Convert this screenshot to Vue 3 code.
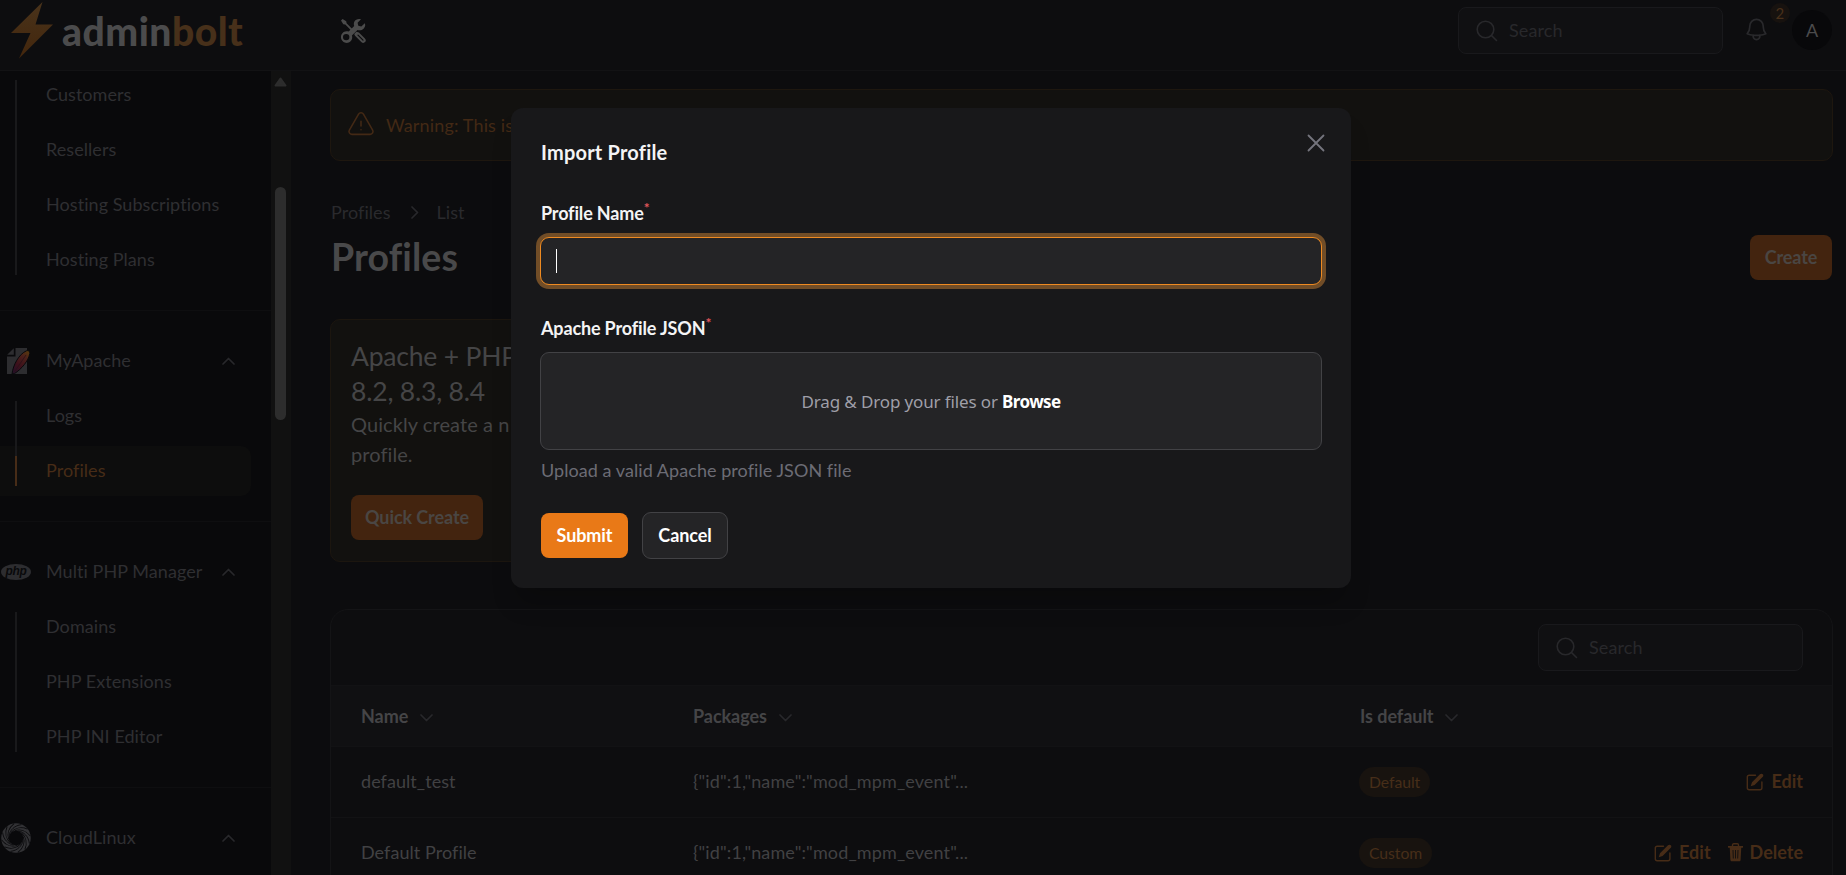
<script setup>
const groups = [
  { items: ['Customers', 'Resellers', 'Hosting Subscriptions', 'Hosting Plans'] },
  { title: 'MyApache', icon: 'apache', items: ['Logs', 'Profiles'] },
  { title: 'Multi PHP Manager', icon: 'php', items: ['Domains', 'PHP Extensions', 'PHP INI Editor'] },
  { title: 'CloudLinux', icon: 'cloud', items: [] },
]
const rows = [
  { name: 'default_test', tag: 'Default', removable: false },
  { name: 'Default Profile', tag: 'Custom', removable: true },
]
const blades = Array.from({ length: 12 }, (_, i) => i * 30)
</script>

<template>
  <div class="app">
    <header class="topbar">
      <div class="brand">
        <svg class="bolt" width="42" height="57" viewBox="0 0 42 57">
          <defs>
            <linearGradient id="boltFill" x1="0" y1="0" x2="0" y2="1">
              <stop offset="0" stop-color="#49331b" />
              <stop offset="1" stop-color="#43260c" />
            </linearGradient>
          </defs>
          <path d="M31.500 0 0 31h19.500L8 56.500 42 22.500H24.500z" fill="url(#boltFill)" />
        </svg>
        <span class="wordmark">admin<b>bolt</b></span>
      </div>
      <svg class="tools" width="26" height="26" viewBox="0 0 26 26">
        <path d="M1 2.600 2.600 1l3.600 2.300.4 2 5.900 5.900-1.300 1.300-5.900-5.900-2-.4z" fill="#4b4b4b" />
        <path d="M24.800 5.200 21.300 8.500l-3-.7-.7-3L21 1.300C18.500.4 15.500 1.200 14.300 3.800c-.6 1.400-.6 2.800-.1 4.100L8.700 13.500c-3-.9-5.900.3-7.200 3-1.600 3.300.2 7.500 3.900 8.300 3.700.8 7-2.100 6.800-5.600 0-.6-.1-1.100-.3-1.600l5.600-5.600c2.200.8 4.700.2 6.300-1.500 1.500-1.600 1.700-3.700 1-5.300zM6.200 22.300a3.200 3.200 0 1 1 0-6.400 3.200 3.200 0 0 1 0 6.400z" fill="#4b4b4b" fill-rule="evenodd" />
        <path d="m14.200 16 2.200-2.200 2.500.6 6 6c1.200 1.200 1.200 2.600.2 3.700-1.100 1.100-2.700 1-3.800-.1l-6.300-6.200z" fill="#4b4b4b" />
        <path d="m18 17.200 5 5" stroke="#0d0d0f" stroke-width="1.200" stroke-linecap="round" />
      </svg>
      <div class="top-actions">
        <div class="search">
          <svg width="24" height="24" viewBox="0 0 24 24" fill="none" stroke="currentColor" stroke-width="1.600" stroke-linecap="round"><circle cx="10.500" cy="10.500" r="8.300" /><path d="m16.500 16.500 5 5" /></svg>
          <span>Search</span>
        </div>
        <div class="bell">
          <svg width="27" height="27" viewBox="0 0 24 24" fill="none" stroke="currentColor" stroke-width="1.500" stroke-linecap="round" stroke-linejoin="round"><path d="M14.857 17.082a23.848 23.848 0 0 0 5.454-1.310A8.967 8.967 0 0 1 18 9.750V9A6 6 0 0 0 6 9v.75a8.967 8.967 0 0 1-2.312 6.022c1.733.64 3.560 1.085 5.455 1.310m5.714 0a24.255 24.255 0 0 1-5.714 0m5.714 0a3 3 0 1 1-5.714 0" /></svg>
          <span class="count">2</span>
        </div>
        <div class="avatar">A</div>
      </div>
    </header>

    <div class="body">
      <aside class="sidebar">
        <nav class="menu">
          <section v-for="(group, g) in groups" :key="g" class="group">
            <div v-if="group.title" class="row heading">
              <span class="icon-cell">
                <svg v-if="group.icon === 'apache'" class="apache" width="25" height="28" viewBox="0 0 25 28">
                  <defs>
                    <linearGradient id="feather" x1="0.800" y1="0" x2="0.200" y2="1">
                      <stop offset="0" stop-color="#55360f" />
                      <stop offset="0.250" stop-color="#4c211a" />
                      <stop offset="0.650" stop-color="#3d101b" />
                      <stop offset="1" stop-color="#261029" />
                    </linearGradient>
                  </defs>
                  <path d="M9.500 1H21v26H1V9.500h8.500z" fill="#2d2d30" />
                  <path d="M7.800 1.200V7.800H1.200z" fill="#2d2d30" />
                  <path d="M6 27C7 18 13 7 20.500 3.800c2-.8 3.600.4 3.300 2.600C22.500 14 15.500 22 8.500 26.600z" fill="url(#feather)" stroke="#09090b" stroke-width="1" />
                  <path d="M8 25.500 20 8" stroke="#291019" stroke-width=".8" />
                </svg>
                <svg v-else-if="group.icon === 'php'" width="30" height="16" viewBox="0 0 30 16">
                  <ellipse cx="15" cy="8" rx="15" ry="8" fill="#2d2d30" />
                  <text x="15" y="11" text-anchor="middle" class="php-text">php</text>
                </svg>
                <svg v-else width="30" height="30" viewBox="0 0 30 30">
                  <circle cx="15" cy="15" r="11" fill="none" stroke="#323235" stroke-width="7.500" />
                  <g v-for="angle in blades" :key="angle" :transform="`rotate(${angle} 15 15)`">
                    <path d="M8 12.500C9 7 13.500 2.500 20.500 1.600" fill="none" stroke="#09090b" stroke-width="0.900" />
                  </g>
                </svg>
              </span>
              <span class="label">{{ group.title }}</span>
              <svg class="caret" width="13" height="8" viewBox="0 0 13 8"><path d="m1 7 5.500-5.500L12 7" /></svg>
            </div>
            <ul v-if="group.items.length" class="items">
              <li v-for="item in group.items" :key="item" class="row" :class="{ active: item === 'Profiles' }"><span class="label">{{ item }}</span></li>
            </ul>
          </section>
        </nav>
        <div class="scrollbar">
          <svg class="scroll-arrow" width="13" height="10" viewBox="0 0 13 10"><path d="M6.500 1.500 11.500 8.500h-10z" fill="#2d2d2d" stroke="#2d2d2d" stroke-width="2" stroke-linejoin="round" /></svg>
          <div class="thumb"></div>
        </div>
      </aside>

      <main class="content">
        <div class="warning">
          <svg width="30" height="30" viewBox="0 0 24 24" fill="none" stroke="currentColor" stroke-width="1.250" stroke-linecap="round" stroke-linejoin="round"><path d="M12 9v3.750m-9.303 3.376c-.866 1.500.217 3.374 1.948 3.374h14.710c1.730 0 2.813-1.874 1.948-3.374L13.949 3.378c-.866-1.500-3.032-1.500-3.898 0L2.697 16.126ZM12 15.750h.007v.008H12v-.008Z" /></svg>
          <span>Warning: This is</span>
        </div>

        <div class="crumbs">
          <span>Profiles</span>
          <svg width="8" height="13" viewBox="0 0 8 13"><path d="m1 1 5.500 5.500L1 12" /></svg>
          <span>List</span>
        </div>
        <div class="title-row">
          <h1>Profiles</h1>
          <button class="btn dim">Create</button>
        </div>

        <section class="promo">
          <h2>Apache + PHP<br />8.2, 8.3, 8.4</h2>
          <p>Quickly create a n<br />profile.</p>
          <button class="btn dim">Quick Create</button>
        </section>

        <section class="table">
          <div class="toolbar">
            <div class="search">
              <svg width="24" height="24" viewBox="0 0 24 24" fill="none" stroke="currentColor" stroke-width="1.600" stroke-linecap="round"><circle cx="10.500" cy="10.500" r="8.300" /><path d="m16.500 16.500 5 5" /></svg>
              <span>Search</span>
            </div>
          </div>
          <div class="tr th">
            <span v-for="column in ['Name', 'Packages', 'Is default']" :key="column" class="cell">
              {{ column }}
              <svg class="sort" width="13" height="8" viewBox="0 0 13 8"><path d="m1 1 5.500 5.500L12 1" /></svg>
            </span>
          </div>
          <div v-for="row in rows" :key="row.name" class="tr">
            <span class="cell">{{ row.name }}</span>
            <span class="cell packages">{"id":1,"name":"mod_mpm_event"...</span>
            <span class="cell"><i class="pill">{{ row.tag }}</i></span>
            <span class="actions">
              <a>
                <svg width="18" height="18" viewBox="0 0 18 18"><path d="M9.500 2.200H3.200C2 2.200 1.300 3 1.300 4v10.800c0 1.100.8 1.900 1.900 1.900H14c1.100 0 1.900-.8 1.900-1.900V9" fill="none" stroke="currentColor" stroke-width="1.400" stroke-linecap="round" /><path d="M4.700 13.300 6 9.300 14 1.300c1-1 2.300-.7 2.800-.1.700.7.700 1.800 0 2.600L8.600 12z" fill="currentColor" /></svg>
                Edit
              </a>
              <a v-if="row.removable">
                <svg width="15" height="19" viewBox="0 0 15 19"><path d="M4.500 3V2c0-.7.500-1.200 1.200-1.200h3.600c.7 0 1.200.5 1.200 1.200v1" fill="none" stroke="currentColor" stroke-width="1.400" /><path d="M.5 3.800h14" stroke="currentColor" stroke-width="1.800" stroke-linecap="round" /><path d="M1.700 4h11.600l-.7 12.700c0 1-.7 1.600-1.600 1.600H4c-.9 0-1.500-.6-1.600-1.600z" fill="currentColor" /><path d="m5 7 .3 8.500M7.500 7v8.500M10 7l-.3 8.500" stroke="#0d0d0f" stroke-width=".9" /></svg>
                Delete
              </a>
            </span>
          </div>
        </section>
      </main>
    </div>

    <div class="overlay">
      <div class="modal">
        <svg class="close" width="18" height="18" viewBox="0 0 18 18"><path d="m1.500 1.500 15 15m0-15-15 15" /></svg>
        <h3>Import Profile</h3>
        <label class="name-label">Profile Name<sup>*</sup></label>
        <div class="field"><span class="text-caret"></span></div>
        <label class="json-label">Apache Profile JSON<sup>*</sup></label>
        <div class="drop"><span>Drag &amp; Drop your files or <b>Browse</b></span></div>
        <p class="hint">Upload a valid Apache profile JSON file</p>
        <div class="buttons">
          <button class="btn primary">Submit</button>
          <button class="btn secondary">Cancel</button>
        </div>
      </div>
    </div>
  </div>
</template>

<style>
body { margin: 0; background: #0c0c0e; overflow: hidden; }
</style>

<style scoped>
.app {
  position: relative;
  display: flex;
  flex-direction: column;
  width: 1846px;
  height: 875px;
  overflow: hidden;
  background: #0c0c0e;
  font-family: Lato, "Noto Sans", sans-serif;
  font-size: 18px;
  line-height: 27px;
  letter-spacing: 0.060px;
  color: #414143;
}
* { box-sizing: border-box; }
h1, h2, h3, p, ul { margin: 0; padding: 0; }
svg { display: block; flex: none; }

.topbar {
  display: flex;
  flex: none;
  height: 71px;
  padding: 0 13px 0 11px;
  background: #0d0d0f;
  border-bottom: 1px solid #121214;
}
.brand { display: flex; width: 329px; padding-top: 2px; }
.wordmark {
  margin: 4px 0 0 9px;
  font-size: 39px;
  line-height: 50px;
  font-weight: 900;
  letter-spacing: 0.500px;
  color: #4b4b4c;
}
.wordmark b { font-weight: 900; color: #47301a; }
.tools { margin-top: 18px; }
.top-actions { display: flex; margin-left: auto; }
.search {
  display: flex;
  align-items: center;
  width: 265px;
  height: 47px;
  padding-left: 16px;
  gap: 10px;
  border: 1px solid #19191c;
  border-radius: 8px;
  background: #101012;
  color: #28282b;
  letter-spacing: 0.100px;
}
.search span { padding-bottom: 1px; }
.top-actions .search { margin-top: 7px; }
.bell { position: relative; margin: 16px 0 0 20px; width: 27px; color: #29292c; }
.count {
  position: absolute;
  left: 27px;
  top: -13px;
  width: 20px;
  height: 20px;
  border-radius: 10px;
  background: #17120f;
  color: #49301a;
  font-size: 15px;
  line-height: 20px;
  text-align: center;
}
.avatar {
  width: 40px;
  height: 40px;
  margin: 10px 1px 0 22px;
  border-radius: 50%;
  background: #08080a;
  color: #4b4b4c;
  line-height: 40px;
  text-align: center;
}

.body { display: flex; flex: 1; min-height: 0; }
.sidebar { display: flex; flex: none; width: 291px; overflow: hidden; background: #09090b; }
.menu { width: 271px; margin-top: -3.500px; color: #2f2f32; }
.group { padding: 22.500px 20px 22.500px 0; border-bottom: 1px solid #0e0e10; }
.group:first-child { padding-top: 0; }
.row { display: flex; align-items: center; height: 55px; padding-left: 46px; list-style: none; }
.heading { padding: 0 16px 0 1px; }
.icon-cell { width: 45px; }
.apache { margin-left: 5px; }
.label { flex: 1; padding-bottom: 1px; white-space: nowrap; }
.caret path, .sort path, .crumbs path { fill: none; stroke: #28282b; stroke-width: 1.700; stroke-linecap: round; stroke-linejoin: round; }
.php-text { font: italic 700 12px "Liberation Sans", sans-serif; letter-spacing: -0.300px; fill: #09090b; }
.items { position: relative; }
.items::before {
  content: "";
  position: absolute;
  z-index: 1;
  left: 15px;
  top: 12.500px;
  bottom: 12.500px;
  width: 2px;
  background: #19191b;
}
.row.active { position: relative; z-index: 0; color: #472c17; }
.row.active::before {
  content: "";
  position: absolute;
  z-index: -1;
  left: 0;
  top: 2.500px;
  width: 251px;
  height: 50px;
  border-radius: 0 10px 10px 0;
  background: #0d0d0d;
}
.row.active::after {
  content: "";
  position: absolute;
  left: 15px;
  top: 12.500px;
  width: 2px;
  height: 30px;
  background: #472c17;
}
.items:has(.active)::before { bottom: 42.500px; }
.scrollbar { display: flex; flex-direction: column; align-items: flex-start; width: 20px; padding: 6px 0 0 3px; background: #111111; }
.thumb { width: 11px; height: 233px; margin: 100px 0 0 1px; border-radius: 6px; background: #2d2d2d; }

.content { flex: 1; min-width: 0; padding: 18px 13px 0 39px; }
.warning {
  display: flex;
  align-items: center;
  height: 72px;
  padding-left: 15px;
  gap: 10px;
  border: 1px solid #1e170f;
  border-radius: 10px;
  background: #12110f;
  color: #432915;
  letter-spacing: 0.150px;
}
.crumbs { display: flex; align-items: center; gap: 18px; height: 28px; margin: 37px 0 0 1px; color: #2a2a2d; }
.crumbs svg { margin: 1px 0 0 2px; }
.title-row { display: flex; justify-content: space-between; height: 45px; margin: 9px 1px 0 1px; }
h1 { font-size: 37.500px; line-height: 43px; font-weight: 700; letter-spacing: 0.100px; color: #49494a; }
.btn {
  height: 45px;
  padding: 0 0 2px;
  border: 0;
  border-radius: 8px;
  font: 700 18px Lato, sans-serif;
  letter-spacing: -0.080px;
}
.btn.dim { width: 132px; background: #43240f; color: #4a4643; }
.title-row .dim { width: 82px; }
.promo {
  width: 360px;
  height: 243px;
  margin-top: 39px;
  padding: 19px 20px 18px;
  border: 1px solid #1c160f;
  border-radius: 10px;
  background: #12110f;
}
.promo h2 { font-size: 26.500px; line-height: 35px; font-weight: 400; letter-spacing: -0.200px; color: #454546; white-space: nowrap; }
.promo p { margin-bottom: 26px; font-size: 20px; line-height: 30px; letter-spacing: 0.080px; color: #454546; }

.table { height: 300px; margin-top: 47px; border: 1px solid #141416; border-radius: 18px 18px 0 0; background: #0d0d0f; }
.toolbar { display: flex; justify-content: flex-end; height: 75px; padding: 14px 29px 0 0; }
.tr {
  display: grid;
  grid-template-columns: 332px 667px 130px 1fr;
  align-items: center;
  height: 71px;
  padding: 0 29px 1px 30px;
  border-top: 1px solid #121214;
}
.th { height: 61px; padding-bottom: 0; background: #101012; font-weight: 700; color: #454547; }
.th .cell { display: flex; align-items: center; gap: 12px; letter-spacing: -0.050px; }
.packages { letter-spacing: 0.130px; }
.sort { margin-top: 3px; }
.pill {
  display: inline-block;
  height: 30px;
  margin-left: -1px;
  padding: 0 10px;
  border-radius: 15px;
  background: #18130f;
  color: #472e19;
  font-size: 15.750px;
  line-height: 29px;
  letter-spacing: -0.050px;
  font-style: normal;
  vertical-align: middle;
}
.actions { display: flex; justify-content: flex-end; gap: 17px; color: #472c17; font-weight: 700; letter-spacing: 0; }
.actions a { display: flex; align-items: center; gap: 7px; }

.overlay { position: absolute; inset: 0; display: flex; justify-content: center; align-items: flex-start; padding: 108px 0 0 16px; }
.modal {
  position: relative;
  width: 840px;
  height: 480px;
  padding: 30px 29px 0 29px;
  border-radius: 12px;
  background: #18181a;
  box-shadow: 0 20px 25px -5px rgba(0, 0, 0, 0.200);
  color: #f4f4f5;
}
.close { position: absolute; top: 26px; right: 26px; }
.close path { stroke: #74747d; stroke-width: 1.800; stroke-linecap: round; }
h3 { padding-left: 1px; font-size: 20px; line-height: 28px; font-weight: 700; letter-spacing: 0.200px; }
label { display: block; padding-left: 1px; font-weight: 700; line-height: 27px; letter-spacing: -0.150px; }
sup { position: relative; top: 0; color: #e0565b; font-size: 14px; font-weight: 700; line-height: 0; vertical-align: super; }
.name-label { margin-top: 34px; }
.json-label { margin-top: 30px; }
.field {
  display: flex;
  align-items: center;
  height: 48px;
  margin-top: 10px;
  padding-left: 15px;
  border: 1px solid #ee8a21;
  border-radius: 9px;
  background: #242426;
  box-shadow: 0 0 0 4px #714d27;
}
.text-caret { width: 1px; height: 24px; background: #fff; }
.drop {
  display: flex;
  align-items: center;
  justify-content: center;
  height: 98px;
  margin-top: 10px;
  border: 1px solid #424245;
  border-radius: 9px;
  background: #242426;
  color: #9f9fa8;
  font-family: "Noto Sans", sans-serif;
  font-size: 17px;
  letter-spacing: -0.130px;
}
.drop b { color: #fff; font-weight: 700; letter-spacing: -0.600px; }
.hint { margin-top: 7px; padding-left: 1px; color: #6c6c75; letter-spacing: 0.060px; }
.buttons { display: flex; align-items: center; gap: 14px; margin: 28px 0 0 1px; }
.primary { width: 87px; background: #e97917; color: #fff; }
.secondary { width: 86px; height: 47px; border: 1px solid #424245; border-radius: 9px; background: #242426; color: #fff; }
</style>
